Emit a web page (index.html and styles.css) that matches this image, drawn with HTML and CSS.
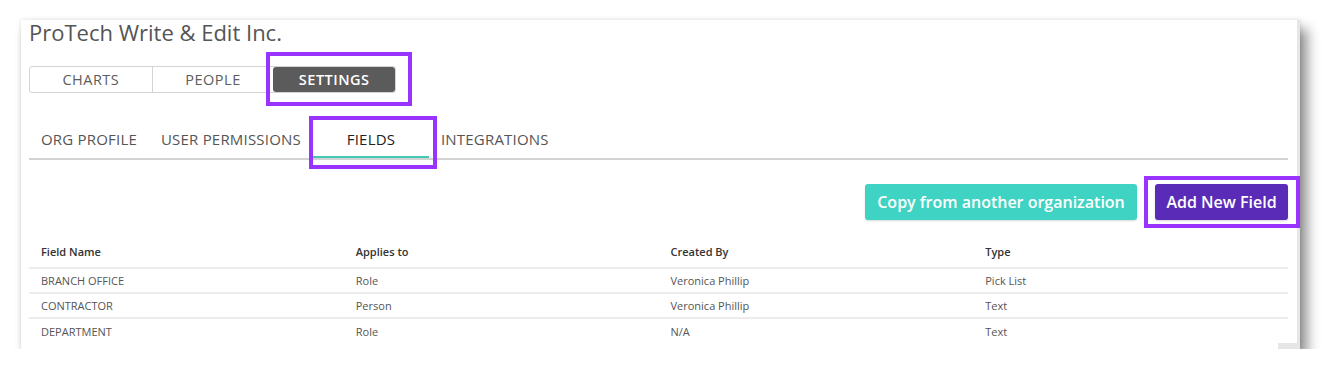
FILE: index.html
```html
<!DOCTYPE html>
<html lang="en">
<head>
  <meta charset="UTF-8">
  <title>ProTech Write &amp; Edit Inc. - Fields</title>
  <link rel="stylesheet" href="styles.css">
</head>
<body>
  <div class="panel">
    <h1 class="org-title">ProTech Write &amp; Edit Inc.</h1>

    <!-- Main tabs -->
    <div class="main-tabs">
      <div class="main-tab">CHARTS</div>
      <div class="main-tab">PEOPLE</div>
      <div class="main-tab active highlight highlight-settings">SETTINGS</div>
    </div>

    <!-- Settings sub tabs -->
    <div class="sub-tabs">
      <div class="sub-tab">ORG PROFILE</div>
      <div class="sub-tab">USER PERMISSIONS</div>
      <div class="sub-tab active highlight highlight-fields">FIELDS</div>
      <div class="sub-tab">INTEGRATIONS</div>
    </div>

    <div class="actions">
      <button class="btn btn-teal">Copy from another organization</button>
      <button class="btn btn-purple highlight highlight-add">Add New Field</button>
    </div>

    <table class="fields-table">
      <thead>
        <tr>
          <th>Field Name</th>
          <th>Applies to</th>
          <th>Created By</th>
          <th>Type</th>
        </tr>
      </thead>
      <tbody>
        <tr>
          <td>BRANCH OFFICE</td>
          <td>Role</td>
          <td>Veronica Phillip</td>
          <td>Pick List</td>
        </tr>
        <tr>
          <td>CONTRACTOR</td>
          <td>Person</td>
          <td>Veronica Phillip</td>
          <td>Text</td>
        </tr>
        <tr>
          <td>DEPARTMENT</td>
          <td>Role</td>
          <td>N/A</td>
          <td>Text</td>
        </tr>
      </tbody>
    </table>
    <div class="scroll-corner"></div>
  </div>
</body>
</html>
```

FILE: styles.css
```css
/* Reset */
* {
  margin: 0;
  padding: 0;
  box-sizing: border-box;
}

body {
  background: #fff;
  font-family: 'Open Sans', sans-serif;
  color: #555;
}

/* Screenshot panel */
.panel {
  position: relative;
  margin: 20px 0 0 21px;
  width: 1279px;
  height: 329px;
  padding: 0 9px 0 8px;
  background: #fff;
  border-right: 3px solid #e6e6e6;
  box-shadow: 0 0 4px rgba(0, 0, 0, 0.12), 7px 9px 12px rgba(0, 0, 0, 0.45);
}

.org-title {
  font-size: 22px;
  font-weight: 400;
  line-height: 24px;
  color: #555;
}

/* Highlight boxes drawn over the screenshot */
.highlight {
  position: relative;
}

.highlight::after {
  content: '';
  position: absolute;
  border: 4px solid #9933ff;
  pointer-events: none;
}

.highlight-settings::after {
  top: -15px;
  left: -7px;
  right: -17px;
  bottom: -14px;
}

.highlight-fields::after {
  top: -4px;
  left: -4px;
  right: -8px;
  bottom: -11px;
}

.highlight-add::after {
  top: -8px;
  left: -11px;
  right: -12px;
  bottom: -8px;
}

/* Main tabs */
.main-tabs {
  display: flex;
  width: 367px;
  margin-top: 22px;
  border: 1px solid #d4d4d4;
  border-radius: 3px;
}

.main-tab {
  width: 122px;
  height: 25px;
  line-height: 25px;
  text-align: center;
  font-size: 14.5px;
  color: #5c5c5c;
  letter-spacing: 0.5px;
}

.main-tab + .main-tab {
  border-left: 1px solid #d4d4d4;
}

.main-tab.active {
  background: #5b5b5b;
  color: #fff;
  font-weight: 600;
  border-radius: 3px;
  border-left: none;
}

/* Sub tabs */
.sub-tabs {
  display: flex;
  margin-top: 27px;
  border-bottom: 2px solid #d2d2d2;
}

.sub-tab {
  height: 38px;
  line-height: 38px;
  padding: 0 12px;
  font-size: 15px;
  color: #555;
  letter-spacing: 0.2px;
}

.sub-tab.active {
  min-width: 116px;
  text-align: center;
  color: #222;
  font-weight: 500;
  box-shadow: inset 0 -2px 0 #45c7b6;
}

/* Buttons */
.actions {
  display: flex;
  justify-content: flex-end;
  gap: 18px;
  margin-top: 24px;
}

.btn {
  height: 36px;
  padding: 0 10px;
  border: none;
  border-radius: 3px;
  font-family: 'Open Sans', sans-serif;
  font-size: 16px;
  font-weight: 600;
  color: #fff;
  box-shadow: 0 1px 2px rgba(0, 0, 0, 0.15);
}

.btn-teal {
  width: 272px;
  background: #3fd3c3;
}

.btn-purple {
  width: 133px;
  background: #5a2bb7;
}

/* Fields table */
.fields-table {
  width: 100%;
  margin-top: 16px;
  border-collapse: collapse;
  table-layout: fixed;
  font-size: 11px;
}

.fields-table th {
  height: 32px;
  padding-left: 12px;
  text-align: left;
  font-weight: 600;
  color: #333;
  border-bottom: 2px solid #ececec;
}

.fields-table td {
  height: 25px;
  padding-left: 12px;
  color: #555;
  border-bottom: 2px solid #ececec;
}

.fields-table tbody tr:last-child td {
  border-bottom: none;
}

.scroll-corner {
  position: absolute;
  right: 0;
  bottom: 0;
  width: 19px;
  height: 6px;
  background: #e6e6e6;
}
```
